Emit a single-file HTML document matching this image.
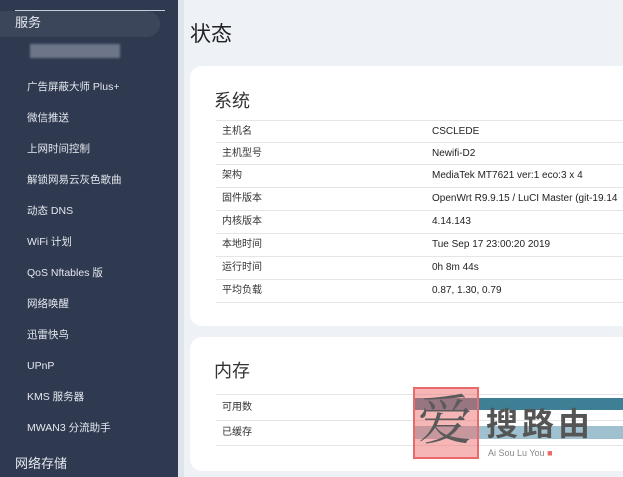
<!DOCTYPE html>
<html><head><meta charset="utf-8"><style>
*{margin:0;padding:0;box-sizing:border-box}
body{width:623px;height:477px;overflow:hidden;background:#eef1f6;font-family:"Liberation Sans","Noto Sans CJK SC",sans-serif;position:relative}
#side{position:absolute;left:0;top:0;width:178px;height:477px;background:#2f3a50}
#side .edge{position:absolute;right:-6px;top:0;width:6px;height:477px;background:#dfe4ec}
.line{position:absolute;left:15px;top:10px;width:150px;height:1px;background:#c8ccd8}
.hl{position:absolute;left:0;top:11px;width:160px;height:26px;background:#3b465b;border-radius:0 14px 14px 0}
.svc{position:absolute;left:15px;top:15px;color:#e6e9f0;font-size:13px;line-height:16px}
.blur{position:absolute;left:30px;top:44px;width:90px;height:14px;background:#6d7689;filter:blur(1px)}
.it{position:absolute;left:27px;color:#e4e7ee;font-size:10.5px;line-height:12px;height:12px}
.net{position:absolute;left:15px;top:456px;color:#e6e9f0;font-size:13px;line-height:16px}
h1{position:absolute;left:190px;top:22px;font-size:21px;line-height:26px;font-weight:normal;color:#222}
.card{position:absolute;left:190px;width:460px;background:#fff;border-radius:12px}
h2{position:absolute;left:214px;font-size:18px;line-height:22px;font-weight:normal;color:#333}
.row{position:absolute;left:216px;width:420px;border-top:1px solid #e3e5ea;font-size:10px;color:#222}
.row span{position:absolute;top:50%;margin-top:-6px;line-height:12px;height:12px}
.row .k{left:6px;color:#333}.row .v{left:216px}
</style></head><body>
<div id="side"><div class="edge"></div><div class="line"></div><div class="hl"></div><div class="svc">服务</div><div class="blur"></div>
<div class="it" style="top:81px">广告屏蔽大师 Plus+</div>
<div class="it" style="top:112px">微信推送</div>
<div class="it" style="top:143px">上网时间控制</div>
<div class="it" style="top:174px">解锁网易云灰色歌曲</div>
<div class="it" style="top:205px">动态 DNS</div>
<div class="it" style="top:236px">WiFi 计划</div>
<div class="it" style="top:267px">QoS Nftables 版</div>
<div class="it" style="top:298px">网络唤醒</div>
<div class="it" style="top:329px">迅雷快鸟</div>
<div class="it" style="top:360px">UPnP</div>
<div class="it" style="top:391px">KMS 服务器</div>
<div class="it" style="top:422px">MWAN3 分流助手</div>
<div class="net">网络存储</div>
</div>
<h1>状态</h1>
<div class="card" style="top:66px;height:260px"></div>
<h2 style="top:90px">系统</h2>
<div class="row" style="top:120px;height:22px"><span class="k">主机名</span><span class="v">CSCLEDE</span></div>
<div class="row" style="top:142px;height:22px"><span class="k">主机型号</span><span class="v">Newifi-D2</span></div>
<div class="row" style="top:164px;height:23px"><span class="k">架构</span><span class="v">MediaTek MT7621 ver:1 eco:3 x 4</span></div>
<div class="row" style="top:187px;height:23px"><span class="k">固件版本</span><span class="v">OpenWrt R9.9.15 / LuCI Master (git-19.14</span></div>
<div class="row" style="top:210px;height:23px"><span class="k">内核版本</span><span class="v">4.14.143</span></div>
<div class="row" style="top:233px;height:23px"><span class="k">本地时间</span><span class="v">Tue Sep 17 23:00:20 2019</span></div>
<div class="row" style="top:256px;height:23px"><span class="k">运行时间</span><span class="v">0h 8m 44s</span></div>
<div class="row" style="top:279px;height:24px;border-bottom:1px solid #e3e5ea"><span class="k">平均负载</span><span class="v">0.87, 1.30, 0.79</span></div>
<div class="card" style="top:337px;height:134px"></div>
<h2 style="top:360px">内存</h2>
<div class="row" style="top:394px;height:26px"><span class="k">可用数</span></div>
<div class="row" style="top:420px;height:26px;border-bottom:1px solid #e3e5ea"><span class="k">已缓存</span></div>
<div style="position:absolute;left:415px;top:398px;width:208px;height:12px;background:#3f7f96"></div>
<div style="position:absolute;left:415px;top:426px;width:208px;height:13px;background:#9fc0cf"></div>
<div style="position:absolute;left:413px;top:387px;width:66px;height:72px;border:2px solid #e86a6a;background:rgba(240,110,110,.5)"></div>
<div style="position:absolute;left:418px;top:382px;font-size:54px;line-height:70px;color:#5a5a5a;font-family:'Noto Serif CJK SC',serif">爱</div>
<div style="position:absolute;left:486px;top:404px;font-size:32px;line-height:36px;color:#555;font-weight:bold;letter-spacing:4px;white-space:nowrap;font-family:'Noto Sans CJK SC',sans-serif">搜路由</div>
<div style="position:absolute;left:488px;top:448px;font-size:9px;line-height:11px;color:#888">Ai Sou Lu You <span style="color:#e66">■</span></div>
</body></html>
